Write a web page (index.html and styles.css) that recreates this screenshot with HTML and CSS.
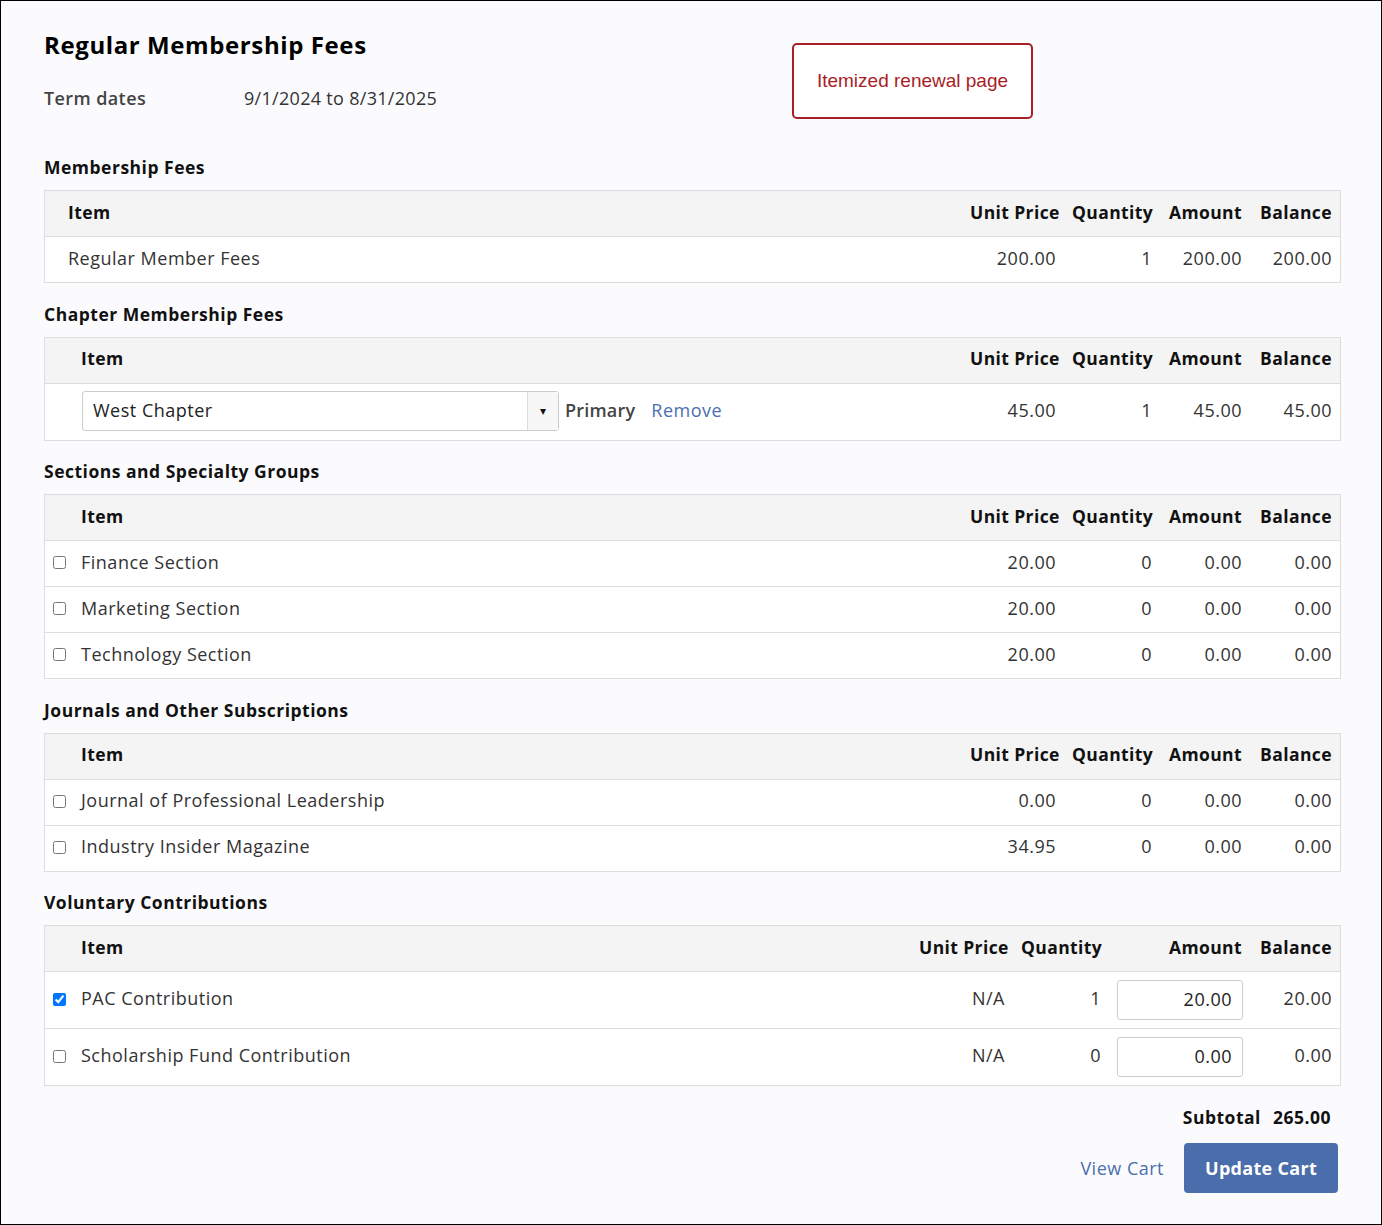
FILE: index.html
```html
<!DOCTYPE html>
<html lang="en">
<head>
<meta charset="utf-8">
<title>Regular Membership Fees</title>
<link rel="stylesheet" href="styles.css">
</head>
<body>
<div class="page">
  <div class="note">Itemized renewal page</div>
  <h1 class="title">Regular Membership Fees</h1>
  <div class="term">
    <span class="term-label">Term dates</span>
    <span class="term-value">9/1/2024 to 8/31/2025</span>
  </div>

  <h2 class="sec-title first">Membership Fees</h2>
  <div class="tbl plain">
    <div class="row head">
      <div class="c item">Item</div>
      <div class="c num">Unit Price</div>
      <div class="c num">Quantity</div>
      <div class="c num">Amount</div>
      <div class="c num">Balance</div>
    </div>
    <div class="row">
      <div class="c item">Regular Member Fees</div>
      <div class="c num">200.00</div>
      <div class="c num">1</div>
      <div class="c num">200.00</div>
      <div class="c num">200.00</div>
    </div>
  </div>

  <h2 class="sec-title">Chapter Membership Fees</h2>
  <div class="tbl">
    <div class="row head">
      <div class="c chk"></div>
      <div class="c item">Item</div>
      <div class="c num">Unit Price</div>
      <div class="c num">Quantity</div>
      <div class="c num">Amount</div>
      <div class="c num">Balance</div>
    </div>
    <div class="row tall">
      <div class="c chk"></div>
      <div class="c item chapter">
        <div class="select">
          <span class="select-text">West Chapter</span>
          <span class="select-arrow">&#9662;</span>
        </div>
        <span class="primary">Primary</span>
        <a class="link remove" href="#">Remove</a>
      </div>
      <div class="c num">45.00</div>
      <div class="c num">1</div>
      <div class="c num">45.00</div>
      <div class="c num">45.00</div>
    </div>
  </div>

  <h2 class="sec-title">Sections and Specialty Groups</h2>
  <div class="tbl">
    <div class="row head">
      <div class="c chk"></div>
      <div class="c item">Item</div>
      <div class="c num">Unit Price</div>
      <div class="c num">Quantity</div>
      <div class="c num">Amount</div>
      <div class="c num">Balance</div>
    </div>
    <div class="row">
      <div class="c chk"><input type="checkbox"></div>
      <div class="c item">Finance Section</div>
      <div class="c num">20.00</div>
      <div class="c num">0</div>
      <div class="c num">0.00</div>
      <div class="c num">0.00</div>
    </div>
    <div class="row">
      <div class="c chk"><input type="checkbox"></div>
      <div class="c item">Marketing Section</div>
      <div class="c num">20.00</div>
      <div class="c num">0</div>
      <div class="c num">0.00</div>
      <div class="c num">0.00</div>
    </div>
    <div class="row">
      <div class="c chk"><input type="checkbox"></div>
      <div class="c item">Technology Section</div>
      <div class="c num">20.00</div>
      <div class="c num">0</div>
      <div class="c num">0.00</div>
      <div class="c num">0.00</div>
    </div>
  </div>

  <h2 class="sec-title">Journals and Other Subscriptions</h2>
  <div class="tbl">
    <div class="row head">
      <div class="c chk"></div>
      <div class="c item">Item</div>
      <div class="c num">Unit Price</div>
      <div class="c num">Quantity</div>
      <div class="c num">Amount</div>
      <div class="c num">Balance</div>
    </div>
    <div class="row">
      <div class="c chk"><input type="checkbox"></div>
      <div class="c item">Journal of Professional Leadership</div>
      <div class="c num">0.00</div>
      <div class="c num">0</div>
      <div class="c num">0.00</div>
      <div class="c num">0.00</div>
    </div>
    <div class="row">
      <div class="c chk"><input type="checkbox"></div>
      <div class="c item">Industry Insider Magazine</div>
      <div class="c num">34.95</div>
      <div class="c num">0</div>
      <div class="c num">0.00</div>
      <div class="c num">0.00</div>
    </div>
  </div>

  <h2 class="sec-title">Voluntary Contributions</h2>
  <div class="tbl vol">
    <div class="row head">
      <div class="c chk"></div>
      <div class="c item">Item</div>
      <div class="c num">Unit Price</div>
      <div class="c num">Quantity</div>
      <div class="c num">Amount</div>
      <div class="c num">Balance</div>
    </div>
    <div class="row tall">
      <div class="c chk"><input type="checkbox" checked></div>
      <div class="c item">PAC Contribution</div>
      <div class="c num">N/A</div>
      <div class="c num">1</div>
      <div class="c field"><input class="amt" type="text" value="20.00"></div>
      <div class="c num">20.00</div>
    </div>
    <div class="row tall">
      <div class="c chk"><input type="checkbox"></div>
      <div class="c item">Scholarship Fund Contribution</div>
      <div class="c num">N/A</div>
      <div class="c num">0</div>
      <div class="c field"><input class="amt" type="text" value="0.00"></div>
      <div class="c num">0.00</div>
    </div>
  </div>

  <div class="subtotal">
    <span>Subtotal</span>
    <span>265.00</span>
  </div>
  <div class="actions">
    <a class="link view" href="#">View Cart</a>
    <button class="btn" type="button">Update Cart</button>
  </div>
</div>
</body>
</html>
```

FILE: styles.css
```css
* { box-sizing: border-box; }

html, body {
  margin: 0;
  padding: 0;
}

body {
  font-family: "Open Sans", "Noto Sans", sans-serif;
  font-size: 18px;
  color: #333;
  background: #fbfbfe;
}

.page {
  position: relative;
  width: 1382px;
  height: 1225px;
  border: 1px solid #000;
  padding: 28px 40px 0 43px;
  background: #fbfbfe;
  letter-spacing: 0.5px;
}

.note {
  position: absolute;
  left: 791px;
  top: 42px;
  width: 241px;
  height: 76px;
  border: 2px solid #a81e26;
  border-radius: 5px;
  background: #fff;
  color: #a81e26;
  font-family: "Liberation Sans", Arial, sans-serif;
  font-size: 19px;
  letter-spacing: 0;
  display: flex;
  align-items: center;
  justify-content: center;
}

.title {
  margin: 0;
  font-size: 24px;
  line-height: 32px;
  font-weight: 700;
  letter-spacing: 0.6px;
  color: #000;
}

.term {
  display: flex;
  margin-top: 25px;
  line-height: 24px;
}

.term-label {
  width: 200px;
  color: #444;
  font-weight: 600;
  letter-spacing: 0.4px;
}

.term-value {
  color: #333;
  letter-spacing: 0.3px;
}

.sec-title {
  margin: 18.5px 0 11px;
  font-size: 17.5px;
  line-height: 24px;
  font-weight: 700;
  letter-spacing: 0.5px;
  color: #111;
}

.sec-title.first {
  margin-top: 45px;
}

.tbl {
  border: 1px solid #ddd;
  background: #fff;
}

.row {
  display: grid;
  grid-template-columns: 36px 1fr 102px 96px 90px 90px;
  min-height: 46px;
  border-top: 1px solid #ddd;
  align-items: center;
}

.tbl.plain .row {
  grid-template-columns: 1fr 102px 96px 90px 90px;
}

.tbl.vol .row {
  grid-template-columns: 36px 1fr 102px 96px 141px 90px;
}

.row.head {
  min-height: 45px;
  border-top: 0;
  background: #f4f4f4;
  font-size: 17.5px;
  font-weight: 700;
  letter-spacing: 0.4px;
  color: #111;
}

.row.tall {
  min-height: 57px;
}

.c {
  padding: 0 8px 4px;
  white-space: nowrap;
}

.c.item {
  padding-left: 0;
}

.tbl.plain .c.item {
  padding-left: 23px;
}

.c.num {
  text-align: right;
}

.c.field {
  padding: 0 8px;
  text-align: right;
}

.c.chk {
  display: flex;
  align-items: center;
  padding: 0 0 2px 8px;
}

.c.chk input {
  margin: 0;
  width: 13px;
  height: 13px;
}

.c.item.chapter {
  display: flex;
  align-items: center;
  padding-bottom: 2px;
}

.select {
  display: flex;
  align-items: stretch;
  width: 477px;
  height: 40px;
  margin-left: 1px;
  border: 1px solid #ccc;
  border-radius: 3px;
  background: #fff;
}

.select-text {
  flex: 1;
  display: flex;
  align-items: center;
  padding: 0 0 2px 10px;
  color: #222;
}

.select-arrow {
  width: 31px;
  display: flex;
  align-items: center;
  justify-content: center;
  border-left: 1px solid #ddd;
  background: #f7f7f7;
  font-size: 12px;
  color: #111;
}

.primary {
  margin-left: 6px;
  padding-bottom: 2px;
  font-weight: 600;
  letter-spacing: 0.2px;
  color: #444;
}

.link {
  color: #4a6fae;
  text-decoration: none;
}

.remove {
  margin-left: 16px;
  padding-bottom: 2px;
}

.amt {
  width: 126px;
  height: 40px;
  border: 1px solid #ccc;
  border-radius: 3px;
  padding: 0 10px 3px;
  text-align: right;
  font: inherit;
  letter-spacing: inherit;
  color: #222;
  background: #fff;
}

.subtotal {
  display: flex;
  justify-content: flex-end;
  gap: 12px;
  margin-top: 19px;
  padding-right: 10px;
  line-height: 24px;
  font-size: 17.5px;
  font-weight: 700;
  color: #111;
}

.actions {
  display: flex;
  justify-content: flex-end;
  align-items: center;
  gap: 20px;
  margin-top: 14px;
  padding-right: 3px;
}

.btn {
  width: 154px;
  height: 50px;
  border: 0;
  border-radius: 4px;
  background: #4a6dab;
  color: #fff;
  font-family: inherit;
  font-size: 18px;
  font-weight: 700;
  letter-spacing: 0.3px;
  cursor: pointer;
}
```
